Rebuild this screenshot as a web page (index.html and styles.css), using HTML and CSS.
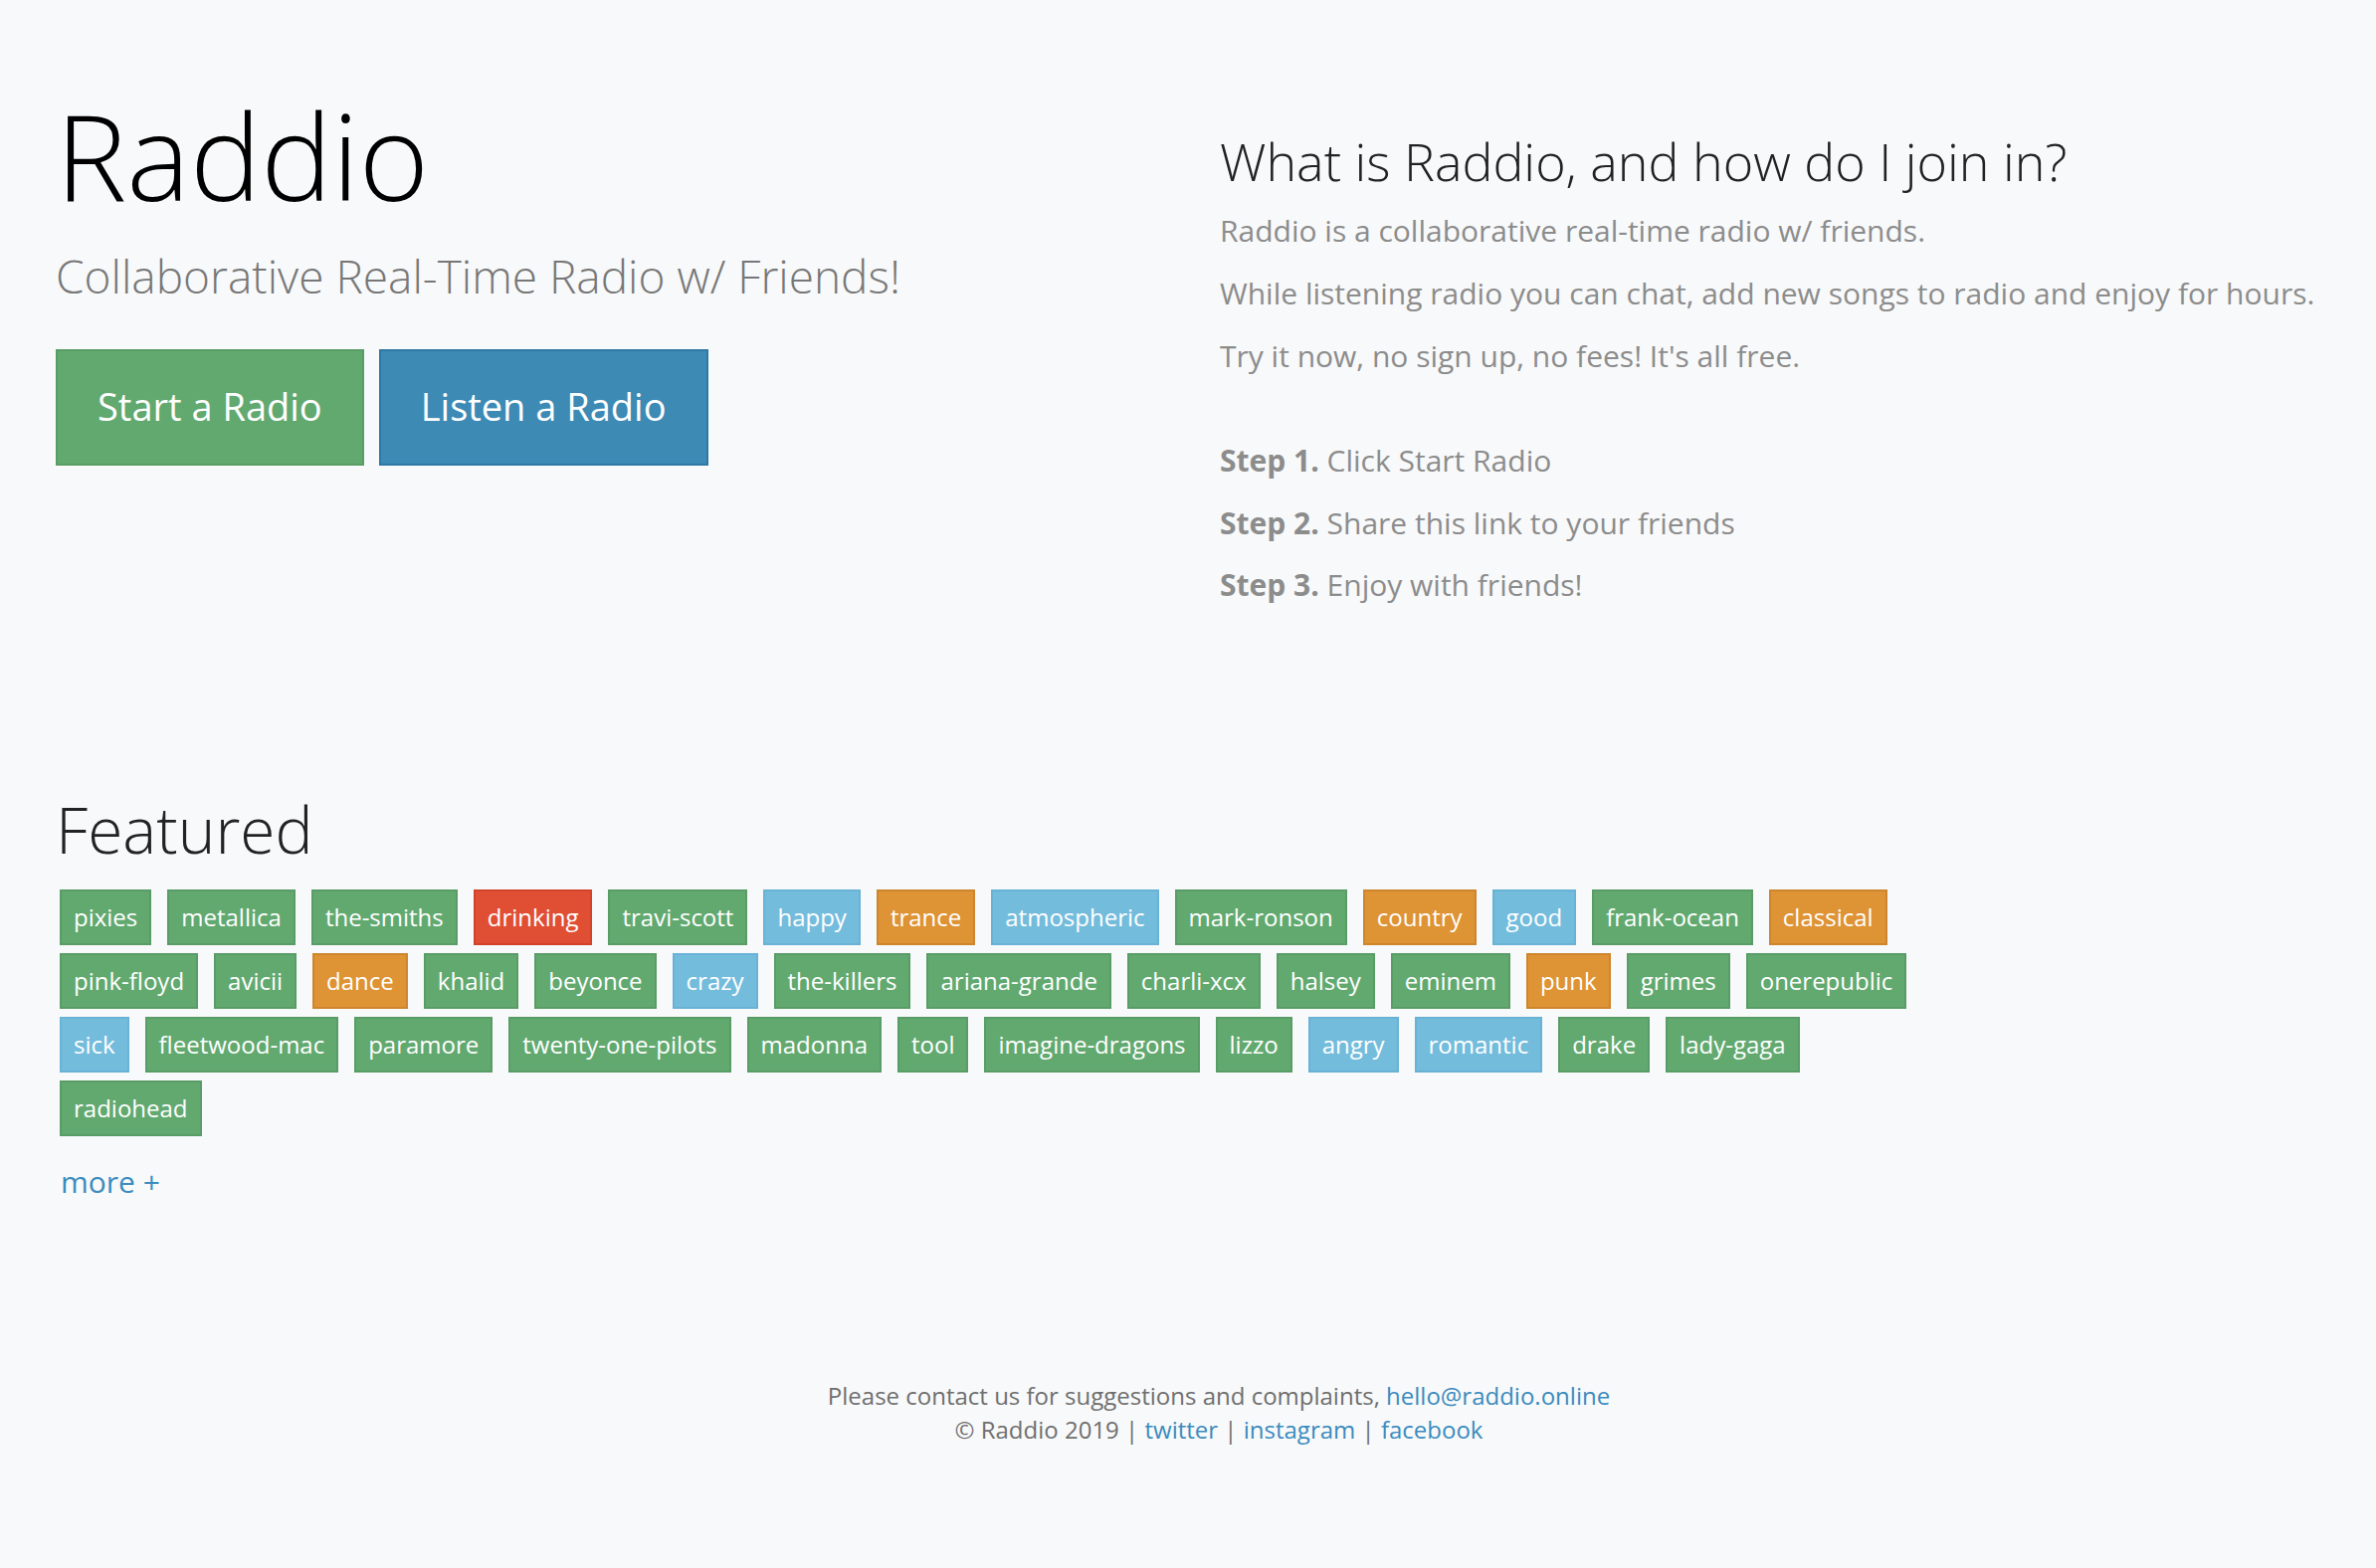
FILE: index.html
```html
<!DOCTYPE html>
<html lang="en">
<head>
<meta charset="utf-8">
<title>Raddio</title>
<link rel="stylesheet" href="styles.css">
</head>
<body>
<div class="page">
  <section class="hero">
    <div class="intro">
      <h1 class="brand">Raddio</h1>
      <p class="tagline">Collaborative Real-Time Radio w/ Friends!</p>
      <div class="actions">
        <a class="btn btn-start" href="#">Start a Radio</a>
        <a class="btn btn-listen" href="#">Listen a Radio</a>
      </div>
    </div>
    <div class="about">
      <h2 class="about-title">What is Raddio, and how do I join in?</h2>
      <p>Raddio is a collaborative real-time radio w/ friends.</p>
      <p>While listening radio you can chat, add new songs to radio and enjoy for hours.</p>
      <p>Try it now, no sign up, no fees! It's all free.</p>
      <div class="steps">
        <p><strong>Step 1.</strong> Click Start Radio</p>
        <p><strong>Step 2.</strong> Share this link to your friends</p>
        <p><strong>Step 3.</strong> Enjoy with friends!</p>
      </div>
    </div>
  </section>

  <section class="featured">
    <h2 class="featured-title">Featured</h2>
    <div class="tags">
      <a class="tag tag-green" href="#">pixies</a>
      <a class="tag tag-green" href="#">metallica</a>
      <a class="tag tag-green" href="#">the-smiths</a>
      <a class="tag tag-red" href="#">drinking</a>
      <a class="tag tag-green" href="#">travi-scott</a>
      <a class="tag tag-blue" href="#">happy</a>
      <a class="tag tag-orange" href="#">trance</a>
      <a class="tag tag-blue" href="#">atmospheric</a>
      <a class="tag tag-green" href="#">mark-ronson</a>
      <a class="tag tag-orange" href="#">country</a>
      <a class="tag tag-blue" href="#">good</a>
      <a class="tag tag-green" href="#">frank-ocean</a>
      <a class="tag tag-orange" href="#">classical</a>
      <a class="tag tag-green" href="#">pink-floyd</a>
      <a class="tag tag-green" href="#">avicii</a>
      <a class="tag tag-orange" href="#">dance</a>
      <a class="tag tag-green" href="#">khalid</a>
      <a class="tag tag-green" href="#">beyonce</a>
      <a class="tag tag-blue" href="#">crazy</a>
      <a class="tag tag-green" href="#">the-killers</a>
      <a class="tag tag-green" href="#">ariana-grande</a>
      <a class="tag tag-green" href="#">charli-xcx</a>
      <a class="tag tag-green" href="#">halsey</a>
      <a class="tag tag-green" href="#">eminem</a>
      <a class="tag tag-orange" href="#">punk</a>
      <a class="tag tag-green" href="#">grimes</a>
      <a class="tag tag-green" href="#">onerepublic</a>
      <a class="tag tag-blue" href="#">sick</a>
      <a class="tag tag-green" href="#">fleetwood-mac</a>
      <a class="tag tag-green" href="#">paramore</a>
      <a class="tag tag-green" href="#">twenty-one-pilots</a>
      <a class="tag tag-green" href="#">madonna</a>
      <a class="tag tag-green" href="#">tool</a>
      <a class="tag tag-green" href="#">imagine-dragons</a>
      <a class="tag tag-green" href="#">lizzo</a>
      <a class="tag tag-blue" href="#">angry</a>
      <a class="tag tag-blue" href="#">romantic</a>
      <a class="tag tag-green" href="#">drake</a>
      <a class="tag tag-green" href="#">lady-gaga</a>
      <a class="tag tag-green" href="#">radiohead</a>
    </div>
    <div class="more"><a href="#">more +</a></div>
  </section>

  <footer class="footer">
    <div>Please contact us for suggestions and complaints, <a href="#">hello@raddio.online</a></div>
    <div>&copy; Raddio 2019 | <a href="#">twitter</a> | <a href="#">instagram</a> | <a href="#">facebook</a></div>
  </footer>
</div>
</body>
</html>
```
FILE: styles.css
```css
html, body {
  margin: 0;
  padding: 0;
  background: #f8f9fa;
}

body {
  font-family: "Open Sans", "Liberation Sans", sans-serif;
  color: #333;
}

.page {
  padding: 0 56px;
}

.hero {
  display: grid;
  grid-template-columns: 1fr 1fr;
  column-gap: 64px;
  align-items: start;
  padding-top: 90px;
}

.brand {
  margin: 0;
  font-size: 120px;
  font-weight: 300;
  line-height: 1.1;
  color: #000;
}

.tagline {
  margin: 30px 0 0;
  font-size: 46px;
  font-weight: 300;
  line-height: 1.1;
  color: #777;
}

.actions {
  display: flex;
  gap: 15px;
  margin-top: 48px;
}

.btn {
  display: inline-flex;
  align-items: center;
  box-sizing: border-box;
  height: 117px;
  padding: 0 40px 3px;
  border: 2px solid;
  font-size: 38px;
  font-weight: 400;
  color: #fff;
  text-decoration: none;
}

.btn-start {
  background: #62a970;
  border-color: #579d64;
}

.btn-listen {
  background: #3d8ab5;
  border-color: #2f78a5;
}

.about-title {
  margin: 43px 0 21px;
  font-size: 52px;
  font-weight: 300;
  line-height: 1.1;
  color: #222;
}

.about p {
  margin: 0 0 20px;
  font-size: 30px;
  line-height: 1.4286;
  color: #8c8c8c;
}

.steps {
  padding-top: 42px;
}

.about .steps p:last-child {
  margin-bottom: 0;
}

.steps strong {
  font-weight: 700;
}

.featured {
  margin-top: 189px;
}

.featured-title {
  margin: 0 0 24px;
  font-size: 64px;
  font-weight: 300;
  line-height: 1.1;
  color: #222;
}

.tags {
  display: flex;
  flex-wrap: wrap;
  gap: 8px 16px;
  box-sizing: border-box;
  max-width: 1884px;
  padding-left: 4px;
}

.tag {
  display: inline-flex;
  align-items: center;
  box-sizing: border-box;
  height: 56px;
  padding: 0 12px;
  border: 2px solid;
  font-size: 24px;
  line-height: 1;
  color: #fff;
  text-decoration: none;
}

.tag-green {
  background: #62a970;
  border-color: #599c66;
}

.tag-blue {
  background: #74bcdc;
  border-color: #69b2d5;
}

.tag-orange {
  background: #de9334;
  border-color: #cd852e;
}

.tag-red {
  background: #e04e34;
  border-color: #d2432c;
}

.more {
  margin-top: 25px;
  padding-left: 5px;
  font-size: 30px;
  line-height: 1.4286;
}

.more a {
  color: #3b8bbe;
  text-decoration: none;
}

.footer {
  margin-top: 177px;
  padding-left: 62px;
  text-align: center;
  font-size: 24px;
  line-height: 34px;
  color: #6f6f6f;
}

.footer a {
  color: #3b8bbe;
  text-decoration: none;
}
```
